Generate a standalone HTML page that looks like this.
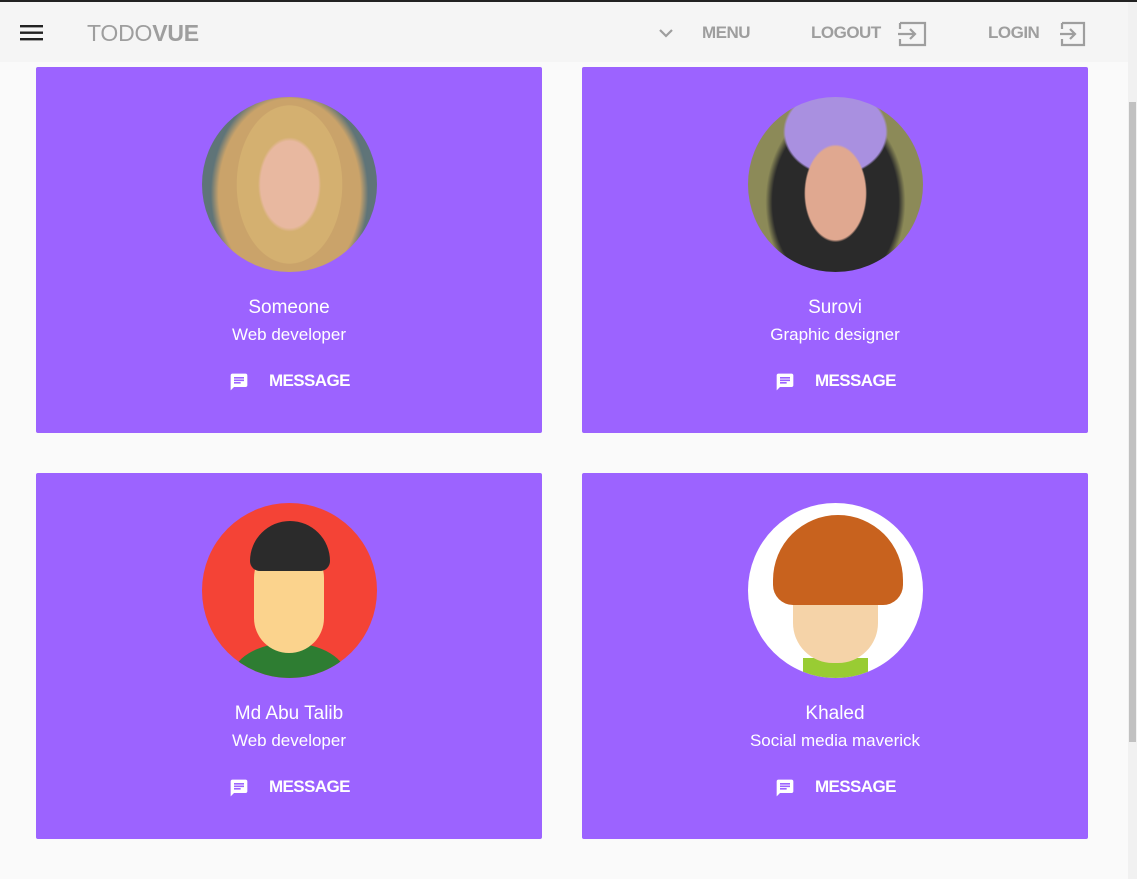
<!DOCTYPE html>
<html><head><style>
body{margin:0;width:1137px;height:879px;background:#fafafa;font-family:"Liberation Sans",sans-serif;overflow:hidden;position:relative}
.top{position:absolute;left:0;top:0;width:1137px;height:2px;background:#222}
.hdr{position:absolute;left:0;top:2px;width:1128px;height:60px;background:#f5f5f5}
.sb{position:absolute;right:0;top:2px;width:9px;height:877px;background:#f1f1f1}
.sb i{position:absolute;left:1px;top:100px;width:7px;height:640px;background:#c1c1c1}
.t{position:absolute;color:#9e9e9e;font-size:17px;font-weight:bold;top:21px;letter-spacing:-0.5px}
.card{position:absolute;width:506px;height:366px;background:#9c63ff;border-radius:2px;color:#fff;text-align:center}
.av{position:absolute;left:166px;top:30px;width:175px;height:175px;border-radius:50%;overflow:hidden}
.nm{position:absolute;top:230px;width:100%;font-size:19px}
.sub{position:absolute;top:258px;width:100%;font-size:17px}
.msg{position:absolute;top:304px;left:194px;font-size:17px;font-weight:bold}
.msg svg{position:absolute;left:-1px;top:1px}
.msg span{position:absolute;left:39px;top:0;white-space:nowrap;letter-spacing:-0.6px}
</style></head><body>
<div class="top"></div>
<div class="hdr">
<svg style="position:absolute;left:20px;top:22px" width="24" height="18"><rect y="1" width="23" height="2.4" fill="#222"/><rect y="7.5" width="23" height="2.4" fill="#222"/><rect y="14" width="23" height="2.4" fill="#222"/></svg>
<div style="position:absolute;left:87px;top:18px;font-size:23px;color:#9e9e9e;letter-spacing:-0.2px">TODO<b>VUE</b></div>
<svg style="position:absolute;left:658px;top:25px" width="16" height="12"><path d="M2 3l6 6 6-6" stroke="#9e9e9e" stroke-width="2.2" fill="none"/></svg>
<div class="t" style="left:702px">MENU</div>
<div class="t" style="left:811px">LOGOUT</div>
<svg style="position:absolute;left:898px;top:19px" width="30" height="26"><path d="M2 2h25v22H2v-6M2 8V2" stroke="#9e9e9e" stroke-width="2.2" fill="none"/><path d="M0 13h17M12 8l5 5-5 5" stroke="#9e9e9e" stroke-width="2.2" fill="none"/></svg>
<div class="t" style="left:988px">LOGIN</div>
<svg style="position:absolute;left:1060px;top:19px" width="26" height="26"><path d="M2 2h22v22H2v-6M2 8V2" stroke="#9e9e9e" stroke-width="2.2" fill="none"/><path d="M0 13h15M10 8l5 5-5 5" stroke="#9e9e9e" stroke-width="2.2" fill="none"/></svg>
</div>
<div class="sb"><i></i></div>

<div class="card" style="left:36px;top:67px">
<div class="av" style="background:radial-gradient(ellipse 30% 45% at 50% 50%,#e8b8a0 0 55%,#d4b070 60% 100%,transparent 101%),radial-gradient(ellipse 45% 60% at 50% 55%,#caa36a 0 90%,transparent 100%),#5f7478"></div>
<div class="nm">Someone</div><div class="sub">Web developer</div>
<div class="msg"><svg width="20" height="20" viewBox="0 0 24 24"><path fill="#fff" d="M20 2H4c-1.1 0-2 .9-2 2v18l4-4h14c1.1 0 2-.9 2-2V4c0-1.1-.9-2-2-2zM6 9h12v2H6V9zm8 5H6v-2h8v2zm4-6H6V6h12v2z"/></svg><span>MESSAGE</span></div>
</div>
<div class="card" style="left:582px;top:67px">
<div class="av" style="background:radial-gradient(ellipse 18% 28% at 50% 55%,#e0a890 0 95%,transparent 100%),radial-gradient(ellipse 30% 25% at 50% 20%,#a990e0 0 95%,transparent 100%),radial-gradient(ellipse 40% 55% at 50% 60%,#2a2a2a 0 90%,transparent 100%),#8c8a58"></div>
<div class="nm">Surovi</div><div class="sub">Graphic designer</div>
<div class="msg"><svg width="20" height="20" viewBox="0 0 24 24"><path fill="#fff" d="M20 2H4c-1.1 0-2 .9-2 2v18l4-4h14c1.1 0 2-.9 2-2V4c0-1.1-.9-2-2-2zM6 9h12v2H6V9zm8 5H6v-2h8v2zm4-6H6V6h12v2z"/></svg><span>MESSAGE</span></div>
</div>
<div class="card" style="left:36px;top:473px">
<div class="av" style="background:#f44336"><div style="position:absolute;left:30px;top:140px;width:115px;height:70px;border-radius:50%;background:#2e7d32"></div><div style="position:absolute;left:52px;top:40px;width:70px;height:110px;border-radius:35px;background:#fbd38d"></div><div style="position:absolute;left:48px;top:18px;width:80px;height:50px;border-radius:40px 40px 10px 10px;background:#2b2b2b"></div></div>
<div class="nm">Md Abu Talib</div><div class="sub">Web developer</div>
<div class="msg"><svg width="20" height="20" viewBox="0 0 24 24"><path fill="#fff" d="M20 2H4c-1.1 0-2 .9-2 2v18l4-4h14c1.1 0 2-.9 2-2V4c0-1.1-.9-2-2-2zM6 9h12v2H6V9zm8 5H6v-2h8v2zm4-6H6V6h12v2z"/></svg><span>MESSAGE</span></div>
</div>
<div class="card" style="left:582px;top:473px">
<div class="av" style="background:#fff"><div style="position:absolute;left:55px;top:155px;width:65px;height:30px;background:#9c3"></div><div style="position:absolute;left:45px;top:50px;width:85px;height:110px;border-radius:40px;background:#f5d3a8"></div><div style="position:absolute;left:25px;top:12px;width:130px;height:90px;border-radius:65px 65px 20px 20px;background:#c8621e"></div></div>
<div class="nm">Khaled</div><div class="sub">Social media maverick</div>
<div class="msg"><svg width="20" height="20" viewBox="0 0 24 24"><path fill="#fff" d="M20 2H4c-1.1 0-2 .9-2 2v18l4-4h14c1.1 0 2-.9 2-2V4c0-1.1-.9-2-2-2zM6 9h12v2H6V9zm8 5H6v-2h8v2zm4-6H6V6h12v2z"/></svg><span>MESSAGE</span></div>
</div>
</body></html>
